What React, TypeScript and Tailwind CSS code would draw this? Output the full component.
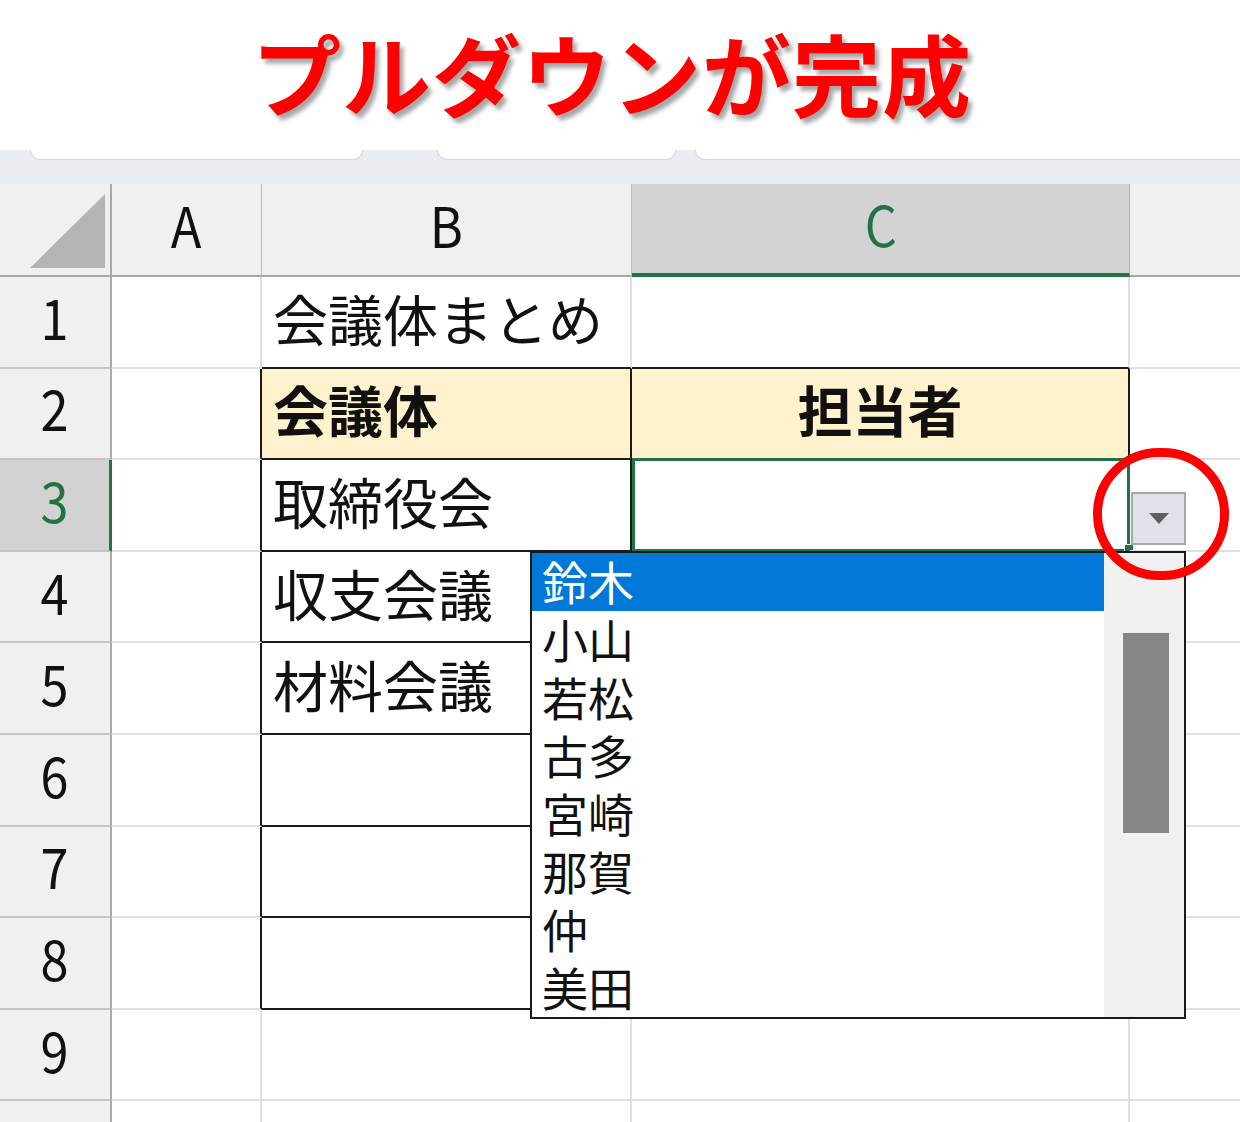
import React from "react";

const names = ["鈴木", "小山", "若松", "古多", "宮崎", "那賀", "仲", "美田"];

function RowHead({ n, selected }: { n: number; selected?: boolean }) {
  return (
    <div
      className={
        "flex items-center justify-center leading-none text-[56px] pb-[12px] border-b-2 border-b-[#c4c4c4] " +
        (selected
          ? "bg-[#d2d2d2] text-[#217346] border-r-[3px] border-r-[#217346]"
          : "bg-[#f0f0f0] text-[#111] border-r-2 border-r-[#a9a9a9]")
      }
    >
      <span className="scale-x-90">{n}</span>
    </div>
  );
}

function Cell({
  className = "",
  children,
}: {
  className?: string;
  children?: React.ReactNode;
}) {
  return (
    <div className={"relative flex items-center leading-none text-[55px] pb-[9px] text-[#111] " + className}>
      {children}
    </div>
  );
}

const L = "border-b-2 border-r-2 border-b-[#e0e0e0] border-r-[#e0e0e0]";

export default function App() {
  return (
    <div className="relative w-[1240px] h-[1122px] overflow-hidden bg-white font-['Noto_Sans_CJK_JP',sans-serif]">
      {/* Title */}
      <div className="h-[150px] flex items-center justify-center pb-[8px] pr-[16px]">
        <h1 className="text-[89px] font-bold leading-none text-[#ff0000] tracking-[1px] [text-shadow:4px_5px_4px_rgba(0,0,0,0.35)]">
          プルダウンが完成
        </h1>
      </div>

      {/* Tab strip */}
      <div className="h-[34px] bg-[#e9edf1] flex items-start">
        <div className="ml-[30px] w-[333px] h-[10px] bg-white rounded-b-[10px] border border-t-0 border-[#d2d6da]" />
        <div className="ml-[74px] w-[239px] h-[10px] bg-white rounded-b-[10px] border border-t-0 border-[#d2d6da]" />
        <div className="ml-[19px] flex-1 h-[10px] bg-white rounded-bl-[10px] border-l border-b border-[#d2d6da]" />
      </div>

      {/* Sheet grid */}
      <div className="grid grid-cols-[112px_150px_370px_498px_110px] grid-rows-[93px_repeat(9,91.6px)_21px]">
        {/* header row */}
        <div className="relative bg-[#f0f0f0] border-b-2 border-b-[#a6a6a6] border-r-2 border-r-[#a9a9a9]">
          <svg className="absolute left-0 top-0" width="112" height="93" viewBox="0 0 112 93">
            <polygon points="30,84 105,84 105,10" fill="#b4b4b4" />
          </svg>
        </div>
        <div className="flex items-center justify-center text-[56px] leading-none pb-[12px] text-[#111] bg-[#f0f0f0] border-b-2 border-b-[#a6a6a6] border-r border-r-[#bdbdbd]">
          <span className="scale-x-90">A</span>
        </div>
        <div className="flex items-center justify-center text-[56px] leading-none pb-[12px] text-[#111] bg-[#f0f0f0] border-b-2 border-b-[#a6a6a6] border-r border-r-[#bdbdbd]">
          <span className="scale-x-90">B</span>
        </div>
        <div className="flex items-center justify-center text-[56px] leading-none pb-[12px] text-[#217346] bg-[#d3d3d3] border-b-4 border-b-[#217346] border-r border-r-[#b0b0b0]">
          <span className="scale-x-90">C</span>
        </div>
        <div className="bg-[#f0f0f0] border-b-2 border-b-[#a6a6a6]" />

        {/* row 1 */}
        <RowHead n={1} />
        <Cell className={L} />
        <Cell className="border-b-2 border-b-[#1a1a1a] border-r-2 border-r-[#e0e0e0] pl-[11px]">会議体まとめ</Cell>
        <Cell className="border-b-2 border-b-[#1a1a1a] border-r-2 border-r-[#e0e0e0]" />
        <Cell className="border-b-2 border-b-[#e0e0e0]" />

        {/* row 2 */}
        <RowHead n={2} />
        <Cell className="border-b-2 border-b-[#e0e0e0] border-r-2 border-r-[#1a1a1a]" />
        <Cell className="bg-[#fff2cc] border-b-2 border-b-[#1a1a1a] border-r-2 border-r-[#1a1a1a] pl-[11px] font-bold">
          会議体
        </Cell>
        <Cell className="bg-[#fff2cc] border-b-2 border-b-[#1a1a1a] border-r-2 border-r-[#1a1a1a] justify-center font-bold">
          担当者
        </Cell>
        <Cell className="border-b-2 border-b-[#e0e0e0]" />

        {/* row 3 */}
        <RowHead n={3} selected />
        <Cell className="border-b-2 border-b-[#e0e0e0] border-r-2 border-r-[#1a1a1a]" />
        <Cell className="border-b-2 border-b-[#1a1a1a] border-r-2 border-r-[#1a1a1a] pl-[11px]">取締役会</Cell>
        <Cell className="">
          <div className="absolute left-0 -top-[2px] right-0 bottom-0 border-[3px] border-[#217346]" />
          <div className="absolute -right-[4px] -bottom-[2px] w-[10px] h-[10px] bg-[#217346] border border-white" />
        </Cell>
        <Cell className="border-b-2 border-b-[#e0e0e0]" />

        {/* rows 4-8 */}
        {[4, 5, 6, 7, 8].map((n) => (
          <React.Fragment key={n}>
            <RowHead n={n} />
            <Cell className="border-b-2 border-b-[#e0e0e0] border-r-2 border-r-[#1a1a1a]" />
            <Cell className="border-b-2 border-b-[#1a1a1a] border-r-2 border-r-[#1a1a1a] pl-[11px]">
              {n === 4 ? "収支会議" : n === 5 ? "材料会議" : ""}
            </Cell>
            <Cell className={L} />
            <Cell className="border-b-2 border-b-[#e0e0e0]" />
          </React.Fragment>
        ))}

        {/* row 9 */}
        <RowHead n={9} />
        <Cell className={L} />
        <Cell className={L} />
        <Cell className={L} />
        <Cell className="border-b-2 border-b-[#e0e0e0]" />

        {/* row 10 (partial) */}
        <div className="bg-[#f0f0f0] border-r-2 border-r-[#a9a9a9]" />
        <div className="border-r-2 border-r-[#e0e0e0]" />
        <div className="border-r-2 border-r-[#e0e0e0]" />
        <div className="border-r-2 border-r-[#e0e0e0]" />
        <div />
      </div>

      {/* Dropdown list */}
      <div className="absolute left-[530px] top-[551px] w-[656px] flex bg-white border-2 border-[#1a1a1a]">
        <div className="flex-1 flex flex-col">
          {names.map((n, i) => (
            <div
              key={n}
              className={
                "h-[58px] flex items-center pl-[10px] pb-[5px] text-[46px] leading-none " +
                (i === 0 ? "bg-[#0078d7] text-white" : "text-[#111]")
              }
            >
              {n}
            </div>
          ))}
        </div>
        <div className="w-[80px] bg-[#f0f0f0] pt-[80px] pl-[19px] pb-[3px]">
          <div className="w-[46px] h-[200px] bg-[#868686]" />
        </div>
      </div>

      {/* Dropdown button */}
      <div className="absolute left-[1131px] top-[492px] w-[55px] h-[53px] bg-[#dfe2e8] border-2 border-[#a8a8a8] flex items-center justify-center">
        <svg width="20" height="11" viewBox="0 0 20 11">
          <polygon points="0,0 20,0 10,11" fill="#5f5f5f" />
        </svg>
      </div>

      {/* Red circle */}
      <div className="absolute left-[1093px] top-[448px] w-[136px] h-[132px] rounded-full border-[9px] border-[#ff0000]" />
    </div>
  );
}
